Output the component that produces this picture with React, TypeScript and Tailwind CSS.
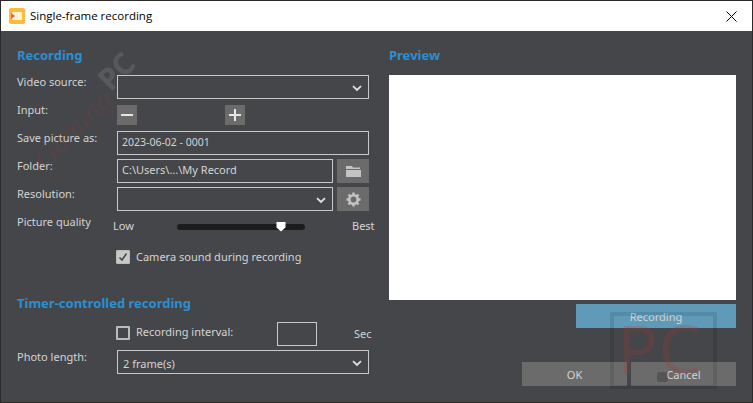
import React from "react";

const Chevron = () => (
  <svg width="10" height="7" viewBox="0 0 10 7" className="absolute right-[6px] top-[9px]">
    <path d="M1 1.2 L5 5 L9 1.2" fill="none" stroke="#e0e0e0" strokeWidth="1.8" />
  </svg>
);

const Label = ({ children }: { children: React.ReactNode }) => (
  <div className="-mt-px w-[100px] shrink-0 text-[11px] leading-[16px] text-[#d4d4d4]">{children}</div>
);

const Field = ({ children, chevron, w = "w-[252px]" }: { children?: React.ReactNode; chevron?: boolean; w?: string }) => (
  <div className={`relative h-6 ${w} shrink-0 border border-[#c9c9c9] pl-[4px] text-[11px] leading-[20px] text-[#d4d4d4]`}>
    {children}
    {chevron && <Chevron />}
  </div>
);

const Square = ({ children }: { children: React.ReactNode }) => (
  <div className="flex h-5 w-5 items-center justify-center bg-[#6b6b6b]">{children}</div>
);

export default function App() {
  return (
    <div
      className="relative h-[403px] w-[753px] overflow-hidden border border-[#2a2a2a] bg-[#45464a]"
      style={{ fontFamily: '"Noto Sans", sans-serif' }}
    >
      <div className="flex h-[30px] items-center justify-between bg-white pl-[8px] pr-[15px]">
        <div className="flex items-center gap-[5px]">
          <svg width="16" height="16" viewBox="0 0 16 16">
            <rect width="16" height="16" rx="2" fill="#fdbb3e" />
            <rect x="3" y="4" width="10" height="8" rx="1" fill="#fff3d6" />
            <path d="M2 5 L6 8 L2 11 Z" fill="#f0641e" />
          </svg>
          <span className="text-[11.5px] text-black" style={{ fontFamily: '"Open Sans", sans-serif' }}>
            Single-frame recording
          </span>
        </div>
        <svg width="11" height="11" viewBox="0 0 11 11">
          <path d="M0.5 0.5 L10.5 10.5 M10.5 0.5 L0.5 10.5" stroke="#000" strokeWidth="1" />
        </svg>
      </div>

      <div className="flex gap-5 pl-4 pt-[14px]">
        <div className="w-[352px] shrink-0">
          <h2 className="h-[30px] text-[13px] font-bold leading-[20px] text-[#2b8fd2]">Recording</h2>
          <div className="flex flex-col gap-1">
            <div className="flex h-6 items-start">
              <Label>Video source:</Label>
              <Field chevron />
            </div>
            <div className="flex h-6 items-start">
              <Label>Input:</Label>
              <div className="mt-[2px] flex w-[128px] shrink-0 justify-between">
                <Square>
                  <div className="h-[2px] w-3 bg-[#e6e6e6]" />
                </Square>
                <Square>
                  <svg width="12" height="12" viewBox="0 0 12 12">
                    <path d="M0 6 H12 M6 0 V12" stroke="#e6e6e6" strokeWidth="2" />
                  </svg>
                </Square>
              </div>
            </div>
            <div className="flex h-6 items-start">
              <Label>Save picture as:</Label>
              <Field>
                <span className="text-[10.5px]">2023-06-02 - 0001</span>
              </Field>
            </div>
            <div className="flex h-6 items-start">
              <Label>Folder:</Label>
              <Field w="w-[216px]">C:\Users\...\My Record</Field>
              <div className="ml-1 flex h-6 w-8 shrink-0 items-center justify-center bg-[#6b6b6b]">
                <svg width="15" height="12" viewBox="0 0 15 12">
                  <path d="M0 1 H6 L7 2.5 H14 V4 H0 Z M0 5 H15 V12 H0 Z" fill="#c4c4c4" />
                </svg>
              </div>
            </div>
            <div className="flex h-6 items-start">
              <Label>Resolution:</Label>
              <Field w="w-[216px]" chevron />
              <div className="ml-1 flex h-6 w-8 shrink-0 items-center justify-center bg-[#6b6b6b]">
                <svg width="15" height="15" viewBox="0 0 15 15">
                  <circle cx="7.5" cy="7.5" r="4.2" fill="none" stroke="#c4c4c4" strokeWidth="2.6" />
                  <path
                    d="M7.5 0.5 V3 M7.5 12 V14.5 M0.5 7.5 H3 M12 7.5 H14.5 M2.5 2.5 L4.3 4.3 M10.7 10.7 L12.5 12.5 M12.5 2.5 L10.7 4.3 M4.3 10.7 L2.5 12.5"
                    stroke="#c4c4c4"
                    strokeWidth="2.4"
                  />
                </svg>
              </div>
            </div>
            <div className="flex h-6 items-start text-[#d4d4d4]">
              <Label>Picture quality</Label>
              <span className="-ml-1 mt-[3px] w-16 shrink-0 text-[11px] leading-[16px]">Low</span>
              <div className="relative mt-[9px] h-[6px] w-32 shrink-0 rounded-[3px] bg-[#1c1c1c]">
                <svg width="10" height="10" viewBox="0 0 10 10" className="absolute left-[99px] -top-[2px]">
                  <path d="M0.5 0 H9.5 V5.5 L5 9.5 L0.5 5.5 Z" fill="#fff" />
                </svg>
              </div>
              <span className="ml-[47px] mt-[3px] shrink-0 text-[11px] leading-[16px]">Best</span>
            </div>
          </div>
          <div className="mt-[6px] flex h-6 items-center pl-[99px]">
            <div className="flex h-[14px] w-[14px] items-center justify-center rounded-[1px] border border-[#bbbbbb] bg-[#c8c8c8]">
              <svg width="10" height="10" viewBox="0 0 10 10">
                <path d="M1.5 5.5 L4 8 L8.5 1.5" fill="none" stroke="#444" strokeWidth="1.5" />
              </svg>
            </div>
            <span className="ml-[6px] text-[11px] text-[#d4d4d4]">Camera sound during recording</span>
          </div>
          <h2 className="mt-[24px] h-[29px] text-[13px] font-bold leading-[20px] text-[#2b8fd2]">
            Timer-controlled recording
          </h2>
          <div className="flex h-6 items-center pl-[99px]">
            <div className="-mt-[3px] h-[14px] w-[14px] shrink-0 rounded-[1px] border-2 border-[#bbbbbb]" />
            <span className="-mt-[3px] ml-[6px] w-[141px] shrink-0 text-[11px] text-[#d4d4d4]">Recording interval:</span>
            <div className="h-6 w-10 shrink-0 border border-[#c9c9c9]" />
            <span className="ml-[37px] shrink-0 text-[11px] text-[#d4d4d4]">Sec</span>
          </div>
          <div className="mt-1 flex h-6 items-start">
            <Label>Photo length:</Label>
            <Field chevron>
              <span className="ml-px block pt-[2px] leading-[22px]">2 frame(s)</span>
            </Field>
          </div>
        </div>

        <div className="w-[347px] shrink-0">
          <h2 className="h-[30px] text-[13px] font-bold leading-[20px] text-[#2b8fd2]">Preview</h2>
          <div className="h-[225px] bg-white" />
          <div className="mt-1 flex justify-end">
            <div className="h-6 w-40 bg-[#5f9ab8] text-center text-[11px] leading-[26px] text-[#d4d4d4]">Recording</div>
          </div>
          <div className="mt-[34px] flex justify-end gap-1">
            <div className="h-6 w-[105px] bg-[#6b6b6b] text-center text-[11px] leading-[26px] text-[#d4d4d4]">OK</div>
            <div className="h-6 w-[105px] bg-[#6b6b6b] text-center text-[11px] leading-[26px] text-[#d4d4d4]">Cancel</div>
          </div>
        </div>
      </div>

      {/* watermark over the dialog */}
      <div className="pointer-events-none absolute left-[85px] top-[50px] w-[60px] -rotate-45 text-center text-[30px] font-bold leading-[40px] text-white/10">
        PC
      </div>
      <div
        className="pointer-events-none absolute left-[11px] top-[108px] w-[120px] -rotate-45 text-center text-[30px] italic leading-[40px] text-[#b03030]/15"
        style={{ fontFamily: '"Liberation Serif", serif' }}
      >
        Gaming
      </div>
      <div className="pointer-events-none absolute left-[609px] top-[311px] h-[77px] w-[107px] border-[4px] border-black/10">
        <div className="whitespace-nowrap pl-[3px] pt-[1px] text-[68px] leading-[62px] text-[#b03030]/20">PC</div>
        <div className="absolute left-[43px] top-[56px] h-[10px] w-[11px] rounded-[2px] bg-black/20" />
      </div>
    </div>
  );
}
